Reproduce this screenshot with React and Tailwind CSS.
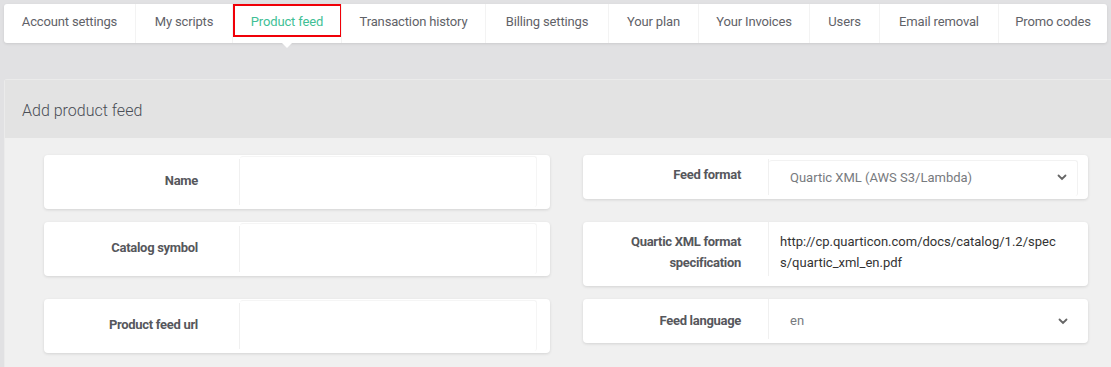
import React from "react";

const tabs = [
  { label: "Account settings", w: 131 },
  { label: "My scripts", w: 97 },
  { label: "Product feed", w: 109, active: true },
  { label: "Transaction history", w: 144 },
  { label: "Billing settings", w: 123 },
  { label: "Your plan", w: 90 },
  { label: "Your Invoices", w: 111 },
  { label: "Users", w: 70 },
  { label: "Email removal", w: 119 },
  { label: "Promo codes", w: 109 },
];

function Chevron() {
  return (
    <svg width="10" height="7" viewBox="0 0 10 7" className="shrink-0">
      <path d="M1.5 1.5 L5 5 L8.5 1.5" fill="none" stroke="#666" strokeWidth="1.8" strokeLinecap="round" />
    </svg>
  );
}

function LeftCard({ label }) {
  return (
    <div className="flex h-[54px] w-[506px] rounded-[4px] bg-white shadow-[0_1px_3px_rgba(0,0,0,0.12)]">
      <div className="flex w-[195px] shrink-0 items-center justify-end pr-[41px] pb-[3px] text-[13px] font-bold tracking-[-0.3px] text-[#56575c]">
        {label}
      </div>
      <div className="my-[4px] w-px bg-[#f0f0f0]" />
      <div className="mt-[1px] mb-[2px] flex-1 mr-[13px] rounded-[3px] border-t border-r border-[#f5f5f5] bg-white" />
    </div>
  );
}

export default function App() {
  return (
    <div className="min-h-[367px] w-[1111px] overflow-hidden bg-[#e1e1e3] pt-[4px] font-['Roboto',sans-serif]">
      <div className="relative mx-[4px] flex h-[39px] rounded-[3px] bg-white shadow-[0_1px_3px_rgba(0,0,0,0.1)]">
        {tabs.map((t, i) => (
          <div
            key={t.label}
            style={{ width: t.w }}
            className={
              "relative flex shrink-0 items-center justify-center text-[13px] tracking-[-0.15px] " +
              (i > 0 ? "border-l border-[#f3f3f3] " : "") +
              (t.active ? "text-[#3fbf96]" : "text-[#5f6268]")
            }
          >
            {t.active && (
              <>
                <div className="absolute left-0 top-0 h-[33px] w-[109px] border-2 border-[#f00008]" />
                <div className="absolute left-1/2 top-[38px] h-0 w-0 -translate-x-1/2 border-x-[6px] border-t-[6px] border-x-transparent border-t-white" />
              </>
            )}
            <span className="relative pb-[4px]">{t.label}</span>
          </div>
        ))}
      </div>

      <div className="ml-[4px] mt-[36px] rounded-tl-[3px] border-l border-t border-[#ebebeb]">
        <div className="flex h-[58px] items-center bg-[#e3e3e3] pl-[17px] pt-[3px] text-[16px] font-light text-[#4a4e56]">
          Add product feed
        </div>
        <div className="grid grid-cols-[506px_505px] items-start gap-x-[33px] gap-y-[13px] bg-[#f0f0f0] pl-[39px] pt-[17px] pb-[20px]">
          <LeftCard label="Name" />
          <div className="flex h-[44px] rounded-[4px] bg-white shadow-[0_1px_3px_rgba(0,0,0,0.12)]">
            <div className="flex w-[185px] shrink-0 items-center justify-end pr-[27px] pb-[5px] text-[13px] font-bold tracking-[-0.3px] text-[#56575c]">
              Feed format
            </div>
            <div className="my-[4px] w-px bg-[#f0f0f0]" />
            <div className="mt-[5px] mb-[3px] mr-[10px] flex flex-1 items-center justify-between rounded-[3px] border-t border-r border-[#f2f2f2] pl-[21px] pr-[10px] pb-[2px] text-[13px] text-[#777a7e]">
              <span>Quartic XML (AWS S3/Lambda)</span>
              <Chevron />
            </div>
          </div>

          <LeftCard label="Catalog symbol" />
          <div className="flex h-[64px] rounded-[4px] bg-white shadow-[0_1px_3px_rgba(0,0,0,0.12)]">
            <div className="flex w-[185px] shrink-0 flex-col items-end justify-center pr-[27px] pb-[4px] text-right text-[13px] font-bold leading-[21px] tracking-[-0.3px] text-[#56575c]">
              <span>Quartic XML format</span>
              <span>specification</span>
            </div>
            <div className="mb-[10px] w-px bg-[#f0f0f0]" />
            <div className="flex flex-1 flex-col justify-center pl-[11px] pr-[14px] pb-[4px] text-[13px] leading-[21px] text-[#333]">
              <span>http://cp.quarticon.com/docs/catalog/1.2/spec</span>
              <span>s/quartic_xml_en.pdf</span>
            </div>
          </div>

          <LeftCard label="Product feed url" />
          <div className="flex h-[44px] rounded-[4px] bg-white shadow-[0_1px_3px_rgba(0,0,0,0.12)]">
            <div className="flex w-[185px] shrink-0 items-center justify-end pr-[27px] pb-[1px] text-[13px] font-bold tracking-[-0.3px] text-[#56575c]">
              Feed language
            </div>
            <div className="mb-[4px] w-px bg-[#f0f0f0]" />
            <div className="mb-[3px] mr-[10px] flex flex-1 items-center justify-between pl-[21px] pr-[10px] pt-[3px] text-[13px] text-[#777a7e]">
              <span>en</span>
              <Chevron />
            </div>
          </div>
        </div>
      </div>
    </div>
  );
}
